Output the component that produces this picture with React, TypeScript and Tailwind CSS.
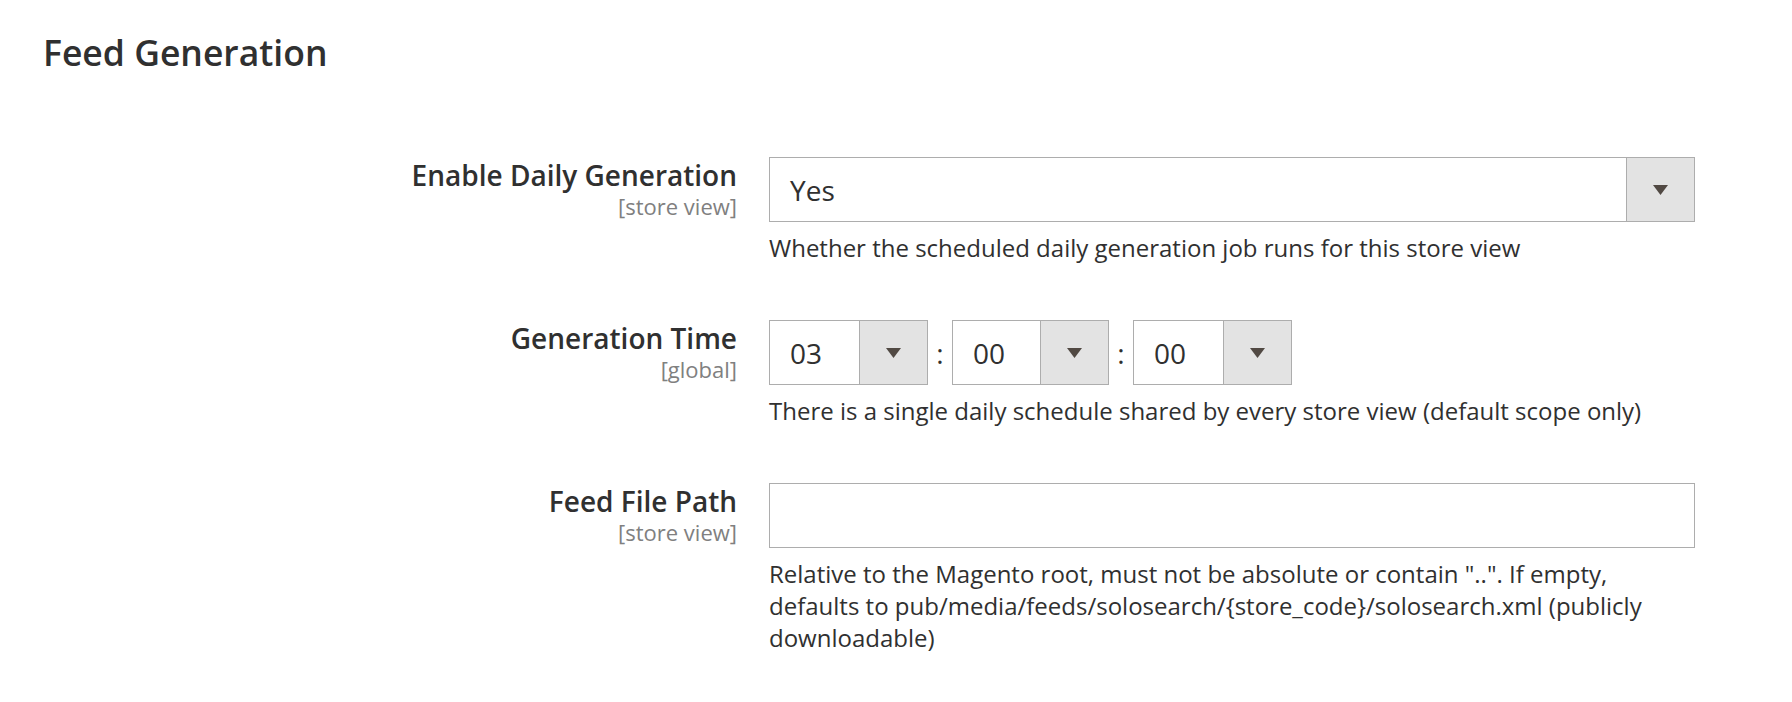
import React from "react";

const font = { fontFamily: '"Open Sans", "Liberation Sans", sans-serif' };

function Arrow() {
  return (
    <svg width="15" height="10" viewBox="0 0 15 10" className="block">
      <polygon points="0,0 15,0 7.5,10" fill="#514943" />
    </svg>
  );
}

function SelectBox({ value, className }: { value: string; className: string }) {
  return (
    <div className={`flex h-[65px] border border-[#adadad] bg-white ${className}`}>
      <div className="flex flex-1 items-center pl-[20px] text-[28px] leading-[32px] text-[#303030]">{value}</div>
      <div className="flex w-[68px] items-center justify-center border-l border-[#adadad] bg-[#e3e3e3]">
        <Arrow />
      </div>
    </div>
  );
}

function Row({
  label,
  scope,
  children,
  note,
}: {
  label: string;
  scope: string;
  children: React.ReactNode;
  note: string;
}) {
  return (
    <div className="flex">
      <div className="w-[737px] shrink-0 pt-[2px] text-right">
        <div className="text-[28px] font-semibold leading-[32px] text-[#303030]">{label}</div>
        <div className="mt-[1px] text-[22px] leading-[28px] text-[#808080]">{scope}</div>
      </div>
      <div className="ml-[32px] w-[926px] shrink-0">
        {children}
        <p className="mt-[10px] text-[24px] leading-[32px] text-[#303030]">{note}</p>
      </div>
    </div>
  );
}

const pathNote =
  'Relative to the Magento root, must not be absolute or contain "..". If empty, defaults to pub/media/feeds/solosearch/{store_code}/solosearch.xml (publicly downloadable)';

export default function App() {
  return (
    <div className="min-h-[702px] w-[1792px] bg-white" style={font}>
      <h2 className="pl-[43px] pt-[32px] text-[35.5px] font-semibold leading-[40px] text-[#303030]">
        Feed Generation
      </h2>
      <div className="mt-[85px] flex flex-col gap-[56px]">
        <Row
          label="Enable Daily Generation"
          scope="[store view]"
          note="Whether the scheduled daily generation job runs for this store view"
        >
          <SelectBox value="Yes" className="w-full" />
        </Row>
        <Row
          label="Generation Time"
          scope="[global]"
          note="There is a single daily schedule shared by every store view (default scope only)"
        >
          <div className="flex items-center">
            <SelectBox value="03" className="w-[159px]" />
            <span className="w-[24px] text-center text-[28px] leading-[32px] text-[#303030]">:</span>
            <SelectBox value="00" className="w-[157px]" />
            <span className="w-[24px] text-center text-[28px] leading-[32px] text-[#303030]">:</span>
            <SelectBox value="00" className="w-[159px]" />
          </div>
        </Row>
        <Row label="Feed File Path" scope="[store view]" note={pathNote}>
          <div className="h-[65px] w-full border border-[#adadad] bg-white" />
        </Row>
      </div>
    </div>
  );
}
